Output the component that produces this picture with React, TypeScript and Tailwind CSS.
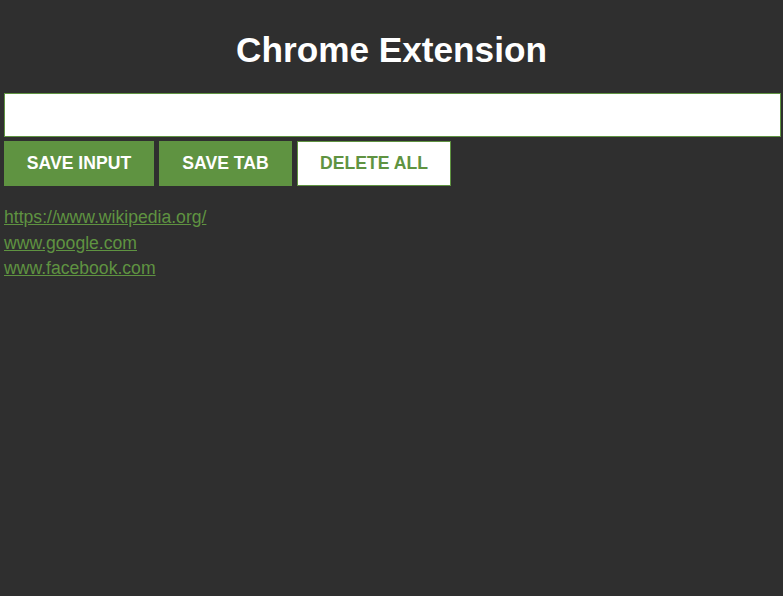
import React, { useState } from "react";

const links = ["https://www.wikipedia.org/", "www.google.com", "www.facebook.com"];

const App = () => {
  const [value, setValue] = useState("");

  return (
    <div className="min-h-screen bg-[#2f2f2f] px-[4px] font-['Liberation_Sans',Arial,sans-serif]">
      <h1 className="pt-[30px] text-center text-[35.2px] leading-[40px] font-bold text-white">
        Chrome Extension
      </h1>
      <input
        className="mt-[23px] block h-[44px] w-[777px] border border-[#5f9341] bg-white px-2 text-[17.6px] outline-none"
        value={value}
        onChange={(e) => setValue(e.target.value)}
      />
      <div className="mt-[4px] flex gap-[5px]">
        <button className="h-[45px] w-[150px] border border-[#5f9341] bg-[#5f9341] text-[17.6px] font-bold text-white">
          SAVE INPUT
        </button>
        <button className="h-[45px] w-[133px] border border-[#5f9341] bg-[#5f9341] text-[17.6px] font-bold text-white">
          SAVE TAB
        </button>
        <button className="h-[45px] w-[154px] border border-[#5f9341] bg-white text-[17.6px] font-bold text-[#5f9341]">
          DELETE ALL
        </button>
      </div>
      <ul className="mt-[19px]">
        {links.map((link) => (
          <li key={link} className="text-[17.6px] leading-[25.5px]">
            <a href="#" className="text-[#5f9341] underline">
              {link}
            </a>
          </li>
        ))}
      </ul>
    </div>
  );
};

export default App;
